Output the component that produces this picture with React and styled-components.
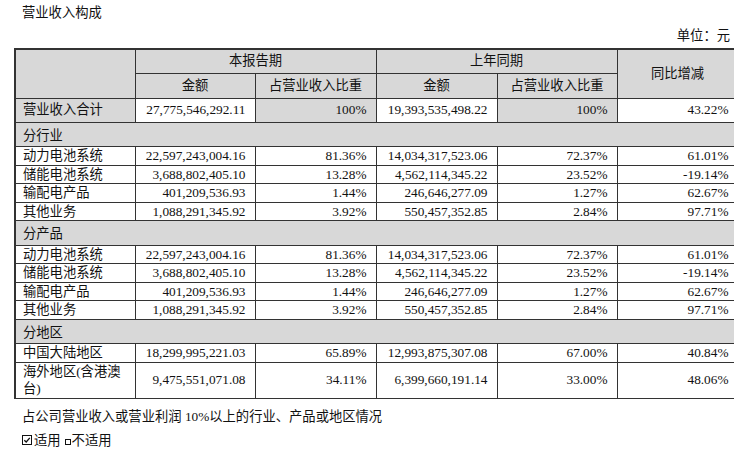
import React from "react";
import styled, { createGlobalStyle } from "styled-components";

const Global = createGlobalStyle`
  html, body { margin: 0; padding: 0; background: #fff; overflow: hidden; }
  body { font-family: "Liberation Serif", "Noto Sans CJK SC", serif; color: #111; }
`;

const Page = styled.div`
  width: 723px;
  padding: 0 0 0 14px;
  font-size: 13.3px;
`;

const Title = styled.div`
  height: 26px;
  line-height: 26px;
  padding-left: 8px;
`;

const Unit = styled.div`
  height: 22px;
  line-height: 20px;
  text-align: right;
  padding-right: 7px;
`;

const Table = styled.table`
  border-collapse: collapse;
  table-layout: fixed;
  width: 723px;
  border-top: 2px solid #333;
  border-left: 2px solid #333;
`;

const Row = styled.tr`
  height: ${(p) => p.$h}px;
`;

const Head = styled.th`
  font-weight: normal;
  background: #d8d8d8;
  border: 1px solid #333;
  text-align: center;
  padding: 0;
  line-height: 16px;
`;

const Cell = styled.td`
  border: 1px solid #333;
  padding: 0 ${(p) => (p.$left ? "6px" : "9px")} 0 ${(p) => (p.$left ? "7px" : "6px")};
  text-align: ${(p) => (p.$left ? "left" : "right")};
  background: ${(p) => (p.$gray ? "#d8d8d8" : "#fff")};
  line-height: 17.5px;
  white-space: ${(p) => (p.$wrap ? "normal" : "nowrap")};
`;

const Section = styled.td`
  border: 1px solid #333;
  background: #d8d8d8;
  padding: 0 7px;
  text-align: left;
`;

const Note = styled.div`
  padding-left: 8px;
  margin-top: 7px;
  height: 22px;
  line-height: 22px;
`;

const Choice = styled.div`
  padding-left: 8px;
  display: flex;
  align-items: center;
  height: 24px;
`;

const Box = styled.span`
  display: inline-block;
  width: 10px;
  height: 10px;
  border: 1px solid #111;
  box-sizing: border-box;
  position: relative;
  margin-right: 2px;
`;

const SmallBox = styled.span`
  display: inline-block;
  width: 6px;
  height: 6px;
  border: 1px solid #111;
  box-sizing: border-box;
  margin: 4px 1px 0 4px;
`;

const sections = [
  { name: "分行业", rows: [
    ["动力电池系统", "22,597,243,004.16", "81.36%", "14,034,317,523.06", "72.37%", "61.01%"],
    ["储能电池系统", "3,688,802,405.10", "13.28%", "4,562,114,345.22", "23.52%", "-19.14%"],
    ["输配电产品", "401,209,536.93", "1.44%", "246,646,277.09", "1.27%", "62.67%"],
    ["其他业务", "1,088,291,345.92", "3.92%", "550,457,352.85", "2.84%", "97.71%"],
  ] },
  { name: "分产品", rows: [
    ["动力电池系统", "22,597,243,004.16", "81.36%", "14,034,317,523.06", "72.37%", "61.01%"],
    ["储能电池系统", "3,688,802,405.10", "13.28%", "4,562,114,345.22", "23.52%", "-19.14%"],
    ["输配电产品", "401,209,536.93", "1.44%", "246,646,277.09", "1.27%", "62.67%"],
    ["其他业务", "1,088,291,345.92", "3.92%", "550,457,352.85", "2.84%", "97.71%"],
  ] },
  { name: "分地区", rows: [
    ["中国大陆地区", "18,299,995,221.03", "65.89%", "12,993,875,307.08", "67.00%", "40.84%"],
    ["海外地区(含港澳台)", "9,475,551,071.08", "34.11%", "6,399,660,191.14", "33.00%", "48.06%"],
  ] },
];

export default function App() {
  return (
    <>
      <Global />
      <Page>
        <Title>营业收入构成</Title>
        <Unit>单位：元</Unit>
        <Table>
          <colgroup>
            <col style={{ width: 120 }} />
            <col style={{ width: 120 }} />
            <col style={{ width: 121 }} />
            <col style={{ width: 121 }} />
            <col style={{ width: 120 }} />
            <col style={{ width: 121 }} />
          </colgroup>
          <tbody>
            <Row $h={24}>
              <Head rowSpan={2} />
              <Head colSpan={2}>本报告期</Head>
              <Head colSpan={2}>上年同期</Head>
              <Head rowSpan={2}>同比增减</Head>
            </Row>
            <Row $h={25}>
              <Head>金额</Head>
              <Head>占营业收入比重</Head>
              <Head>金额</Head>
              <Head>占营业收入比重</Head>
            </Row>
            <Row $h={24}>
              <Cell $left $gray>营业收入合计</Cell>
              <Cell>27,775,546,292.11</Cell>
              <Cell $gray>100%</Cell>
              <Cell>19,393,535,498.22</Cell>
              <Cell $gray>100%</Cell>
              <Cell>43.22%</Cell>
            </Row>
            {sections.map((s) => (
              <React.Fragment key={s.name}>
                <Row $h={24.5}>
                  <Section colSpan={6}>{s.name}</Section>
                </Row>
                {s.rows.map((r, i) => {
                  const wrap = r[0].length > 7;
                  return (
                    <Row key={i} $h={wrap ? 35.5 : 18.4}>
                      <Cell $left $wrap={wrap}>{r[0]}</Cell>
                      {r.slice(1).map((v, j) => (
                        <Cell key={j}>{v}</Cell>
                      ))}
                    </Row>
                  );
                })}
              </React.Fragment>
            ))}
          </tbody>
        </Table>
        <Note>占公司营业收入或营业利润 10%以上的行业、产品或地区情况</Note>
        <Choice>
          <Box>
            <svg width="8" height="8" viewBox="0 0 8 8" style={{ position: "absolute", left: 0, top: 0 }}>
              <path d="M1.3 4.2 L3.2 6 L6.8 1.8" fill="none" stroke="#111" strokeWidth="1.3" />
            </svg>
          </Box>
          适用
          <SmallBox />
          不适用
        </Choice>
      </Page>
    </>
  );
}
